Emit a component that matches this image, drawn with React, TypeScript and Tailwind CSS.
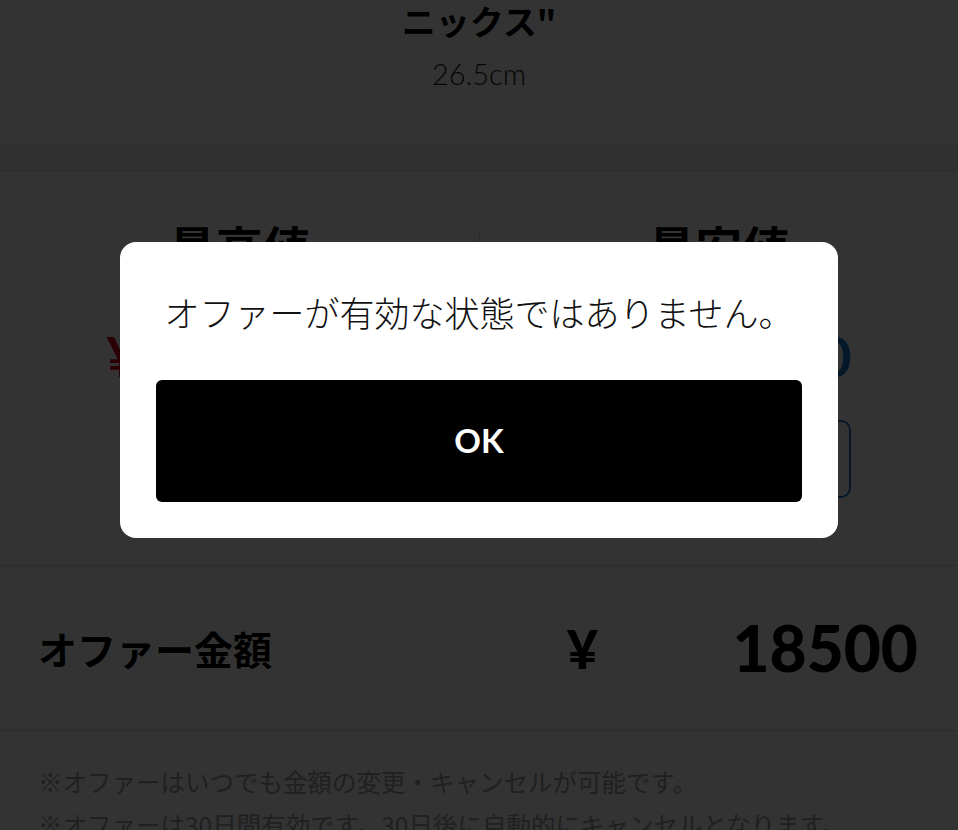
import React from 'react';

const jp = "font-['Noto_Sans_CJK_JP','Noto_Sans',sans-serif]";
const num = "font-['Lato','Noto_Sans_CJK_JP',sans-serif]";

const PriceColumn: React.FC<{ label: string; price: string; color: string; button?: string }> = ({
  label,
  price,
  color,
  button,
}) => (
  <div className="flex-1 flex flex-col items-center pt-[46px]">
    <h2 className="text-[47px] leading-[56px] font-bold text-black">{label}</h2>
    <div className={`mt-[50px] w-[266px] flex justify-between text-[56px] leading-[64px] font-bold ${num} ${color}`}>
      <span>¥</span>
      <span>{price}</span>
    </div>
    {button ? (
      <div className="mt-[32px] w-[264px] h-[78px] rounded-[10px] border-2 border-[#1479d2] flex items-center justify-center text-[26px] font-bold text-[#1479d2]">
        {button}
      </div>
    ) : null}
  </div>
);

export default function App() {
  return (
    <div className={`relative w-[958px] h-[830px] overflow-hidden bg-white ${jp}`}>
      {/* product header */}
      <div className="h-[143px] flex flex-col items-center">
        <h1 className="text-[34px] leading-[42px] font-bold text-black">ニックス"</h1>
        <p className={`mt-[12px] text-[29px] leading-[40px] font-light text-[#222] ${num}`}>26.5cm</p>
      </div>
      <div className="h-[29px] bg-[#eeeeee] border-b border-[#dcdcdc]" />

      {/* price columns */}
      <div className="h-[393px] flex">
        <PriceColumn label="最高値" price="21,800" color="text-[#d0021b]" />
        <div className="w-px bg-[#dcdcdc] my-[60px]" />
        <PriceColumn label="最安値" price="19,500" color="text-[#1479d2]" button="購入する" />
      </div>

      {/* offer amount */}
      <div className="h-[166px] border-y border-[#dcdcdc] flex items-center pl-[38px] pr-[40px]">
        <span className="flex-1 text-[39px] font-bold text-black">オファー金額</span>
        <span className={`text-[54px] font-black text-black ${num}`}>¥</span>
        <span className={`w-[320px] text-right text-[64px] font-black text-black ${num}`}>18500</span>
      </div>

      {/* notes */}
      <div className="pt-[29px] px-[38px] text-[24.5px] leading-[43px] text-[#a0a0a0]">
        <p>※オファーはいつでも金額の変更・キャンセルが可能です。</p>
        <p>※オファーは30日間有効です。30日後に自動的にキャンセルとなります。</p>
      </div>

      {/* dialog */}
      <div className="absolute inset-0 bg-black/80 flex justify-center items-start pt-[242px]">
        <div className="w-[718px] rounded-[16px] bg-white px-[36px] pt-[45px] pb-[36px] flex flex-col items-center">
          <p className="text-[35px] leading-[50px] font-light text-[#111]">オファーが有効な状態ではありません。</p>
          <button className="mt-[43px] w-full h-[122px] rounded-[6px] bg-black text-white text-[33px] font-bold font-['Lato',sans-serif]">
            OK
          </button>
        </div>
      </div>
    </div>
  );
}
